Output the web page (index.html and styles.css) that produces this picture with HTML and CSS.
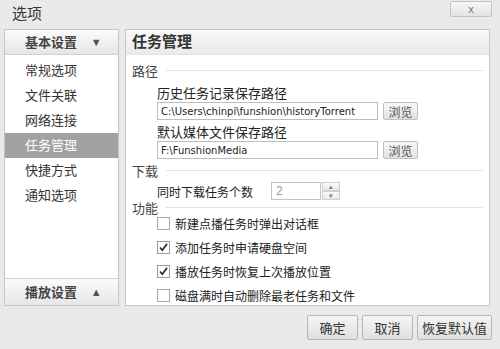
FILE: index.html
```html
<!DOCTYPE html>
<html lang="zh-CN">
<head>
    <meta charset="UTF-8">
    <title>选项</title>
    <link rel="stylesheet" href="styles.css">
</head>
<body>
    <div class="dialog">
        <header class="titlebar">
            <h1>选项</h1>
            <button class="close-btn">x</button>
        </header>

        <main class="body">
            <!-- Left navigation -->
            <aside class="nav">
                <div class="nav-head">基本设置 <span class="tri">&#9660;</span></div>
                <ul class="nav-list">
                    <li>常规选项</li>
                    <li>文件关联</li>
                    <li>网络连接</li>
                    <li class="active">任务管理</li>
                    <li>快捷方式</li>
                    <li>通知选项</li>
                </ul>
                <div class="nav-foot">播放设置 <span class="tri up">&#9650;</span></div>
            </aside>

            <!-- Settings page -->
            <section class="page">
                <div class="page-head">任务管理</div>
                <div class="page-content">
                    <div class="group">路径</div>
                    <div class="label">历史任务记录保存路径</div>
                    <div class="path-row">
                        <input class="path" type="text" value="C:\Users\chinpi\funshion\historyTorrent">
                        <button class="browse">浏览</button>
                    </div>
                    <div class="label">默认媒体文件保存路径</div>
                    <div class="path-row">
                        <input class="path" type="text" value="F:\FunshionMedia">
                        <button class="browse">浏览</button>
                    </div>

                    <div class="group">下载</div>
                    <div class="spin-row">
                        <span class="spin-label">同时下载任务个数</span>
                        <input class="spin" type="text" value="2">
                        <span class="spin-btns">
                            <span class="arrow">&#9652;</span>
                            <span class="arrow">&#9662;</span>
                        </span>
                    </div>

                    <div class="group small">功能</div>
                    <ul class="checks">
                        <li><span class="box"></span>新建点播任务时弹出对话框</li>
                        <li><span class="box checked"><svg viewBox="0 0 11 11" width="11" height="11"><path d="M2 5.5 L4.3 8.3 L9 1.8" fill="none" stroke="#222" stroke-width="1.6"/></svg></span>添加任务时申请硬盘空间</li>
                        <li><span class="box checked"><svg viewBox="0 0 11 11" width="11" height="11"><path d="M2 5.5 L4.3 8.3 L9 1.8" fill="none" stroke="#222" stroke-width="1.6"/></svg></span>播放任务时恢复上次播放位置</li>
                        <li><span class="box"></span>磁盘满时自动删除最老任务和文件</li>
                    </ul>
                </div>
            </section>
        </main>

        <footer class="actions">
            <button class="btn">确定</button>
            <button class="btn">取消</button>
            <button class="btn wide">恢复默认值</button>
        </footer>
    </div>
</body>
</html>
```

FILE: styles.css
```css
/* Reset */
body, h1, ul, li {
    margin: 0;
    padding: 0;
}

ul {
    list-style: none;
}

body {
    font-family: "Liberation Sans", "Noto Sans CJK SC", sans-serif;
    background-color: #e9e9e9;
    color: #222;
}

.dialog {
    width: 500px;
    height: 349px;
    display: flex;
    flex-direction: column;
}

/* Title bar */
.titlebar {
    height: 29px;
    display: flex;
    justify-content: space-between;
    align-items: flex-start;
    padding: 0 8px 0 12px;
}

.titlebar h1 {
    font-size: 15px;
    font-weight: normal;
    line-height: 28px;
    color: #333;
}

.close-btn {
    margin-top: 1px;
    width: 42px;
    height: 16px;
    padding: 0;
    border: 1px solid #c4c4c4;
    border-radius: 2px;
    background: linear-gradient(#f7f7f7, #e4e4e4);
    color: #777;
    font-size: 11px;
    line-height: 12px;
    font-family: "Liberation Sans", sans-serif;
}

/* Main area */
.body {
    height: 277px;
    display: flex;
    gap: 6px;
    padding: 0 10px 0 4px;
}

.nav {
    width: 113px;
    border: 1px solid #c6c6c6;
    background-color: white;
    display: flex;
    flex-direction: column;
}

.nav-head,
.nav-foot {
    height: 24px;
    line-height: 24px;
    padding-left: 20px;
    font-size: 13px;
    font-weight: bold;
    color: #444;
    background: linear-gradient(#fbfbfb, #e6e6e6);
}

.nav-head {
    border-bottom: 1px solid #d2d2d2;
}

.nav-foot {
    height: 26px;
    line-height: 26px;
    border-top: 1px solid #d2d2d2;
}

.tri {
    font-size: 11px;
    color: #555;
    margin-left: 10px;
    vertical-align: 1px;
}

.nav-list {
    flex: 1;
    padding-top: 3px;
}

.nav-list li {
    height: 25px;
    line-height: 25px;
    padding-left: 20px;
    font-size: 13px;
    color: #333;
}

.nav-list li.active {
    background-color: #a2a2a2;
    color: white;
}

.page {
    flex: 1;
    border: 1px solid #c6c6c6;
    background-color: white;
    display: flex;
    flex-direction: column;
}

.page-head {
    height: 24px;
    line-height: 24px;
    padding-left: 6px;
    font-size: 15px;
    font-weight: bold;
    color: #333;
    background: linear-gradient(#f8f8f8, #eaeaea);
    border-bottom: 1px solid #e2e2e2;
}

.page-content {
    padding: 4px 6px 0 6px;
    font-size: 12px;
}

/* Group headings with a rule */
.group {
    height: 22px;
    display: flex;
    align-items: center;
    gap: 8px;
    font-size: 13px;
    color: #444;
}

.group::after {
    content: "";
    flex: 1;
    border-top: 1px solid #e2e2e2;
}

.group.small {
    height: 14px;
}

.label {
    margin: 5px 0 0 25px;
    height: 16px;
    line-height: 16px;
    font-size: 13px;
}

.path-row {
    margin-left: 25px;
    height: 18px;
    display: flex;
    gap: 5px;
}

.path {
    width: 221px;
    height: 18px;
    box-sizing: border-box;
    border: 1px solid #bdbdbd;
    padding: 0 3px;
    font-family: "DejaVu Sans", sans-serif;
    font-size: 10px;
    color: #222;
}

.browse {
    width: 35px;
    height: 18px;
    padding: 0;
    border: 1px solid #c0c0c0;
    border-radius: 2px;
    background: linear-gradient(#f8f8f8, #e2e2e2);
    font-size: 12px;
    color: #555;
    font-family: "Noto Sans CJK SC", sans-serif;
}

.spin-row {
    margin: 1px 0 0 25px;
    height: 18px;
    display: flex;
    align-items: center;
}

.spin-label {
    width: 114px;
}

.spin {
    width: 50px;
    height: 18px;
    box-sizing: border-box;
    border: 1px solid #c4c4c4;
    padding: 0 4px;
    font-size: 12px;
    color: #999;
}

.spin-btns {
    margin-left: 1px;
    width: 18px;
    height: 18px;
    display: flex;
    flex-direction: column;
}

.arrow {
    flex: 1;
    border: 1px solid #cfcfcf;
    background: linear-gradient(#fafafa, #e8e8e8);
    font-size: 7px;
    line-height: 7px;
    text-align: center;
    color: #777;
}

.checks {
    display: flex;
    flex-direction: column;
    gap: 6px;
    margin-left: 25px;
}

.checks li {
    height: 18px;
    display: flex;
    align-items: center;
    gap: 5px;
    font-size: 12px;
}

.box {
    width: 11px;
    height: 11px;
    border: 1px solid #a8a8a8;
    background-color: white;
    display: flex;
}

.box.checked {
    border-color: #9a9a9a;
}

/* Bottom buttons */
.actions {
    display: flex;
    justify-content: flex-end;
    gap: 4px;
    padding: 9px 8px 0 0;
}

.btn {
    width: 51px;
    height: 25px;
    padding: 0;
    border: 1px solid #b6b6b6;
    border-radius: 2px;
    background: linear-gradient(#f5f5f5, #e0e0e0);
    font-size: 13px;
    color: #333;
    font-family: "Noto Sans CJK SC", sans-serif;
}

.btn.wide {
    width: 75px;
}
```
